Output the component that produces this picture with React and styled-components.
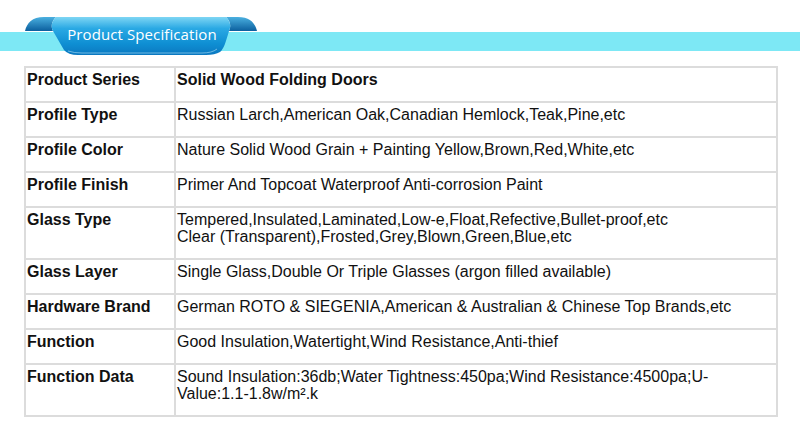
import React from "react";
import styled, { createGlobalStyle } from "styled-components";

// CORES
const cores = {
  barra: "#7de8f5",
  borda: "#dcdcdc",
  texto: "#111111",
  branco: "#ffffff",
};

const GlobalStyle = createGlobalStyle`
  html, body {
    margin: 0;
    padding: 0;
    background: ${cores.branco};
  }
  body {
    font-family: "Liberation Sans", Arial, sans-serif;
    color: ${cores.texto};
  }
`;

// COMPONENTES STYLED
const Pagina = styled.div`
  width: 800px;
  height: 430px;
  overflow: hidden;
`;

const Cabecalho = styled.div`
  position: relative;
  padding-top: 32px;
  height: 34px;
`;

const Barra = styled.div`
  height: 19px;
  background-color: ${cores.barra};
`;

const Fita = styled.div`
  position: absolute;
  left: 24px;
  top: 15px;
  width: 234px;
  height: 42px;

  svg {
    display: block;
  }
`;

const TituloFita = styled.span`
  position: absolute;
  left: 0;
  right: 0;
  top: 9px;
  text-align: center;
  padding-left: 2px;
  font-family: "Open Sans", "Noto Sans", sans-serif;
  font-size: 15px;
  line-height: 20px;
  color: ${cores.branco};
  letter-spacing: 0.1px;
`;

const Tabela = styled.table`
  margin-left: 24px;
  width: 754px;
  border-collapse: collapse;
  border: 2px solid ${cores.borda};
  table-layout: fixed;
`;

const Celula = styled.td`
  border: 2px solid ${cores.borda};
  padding: 3px 2px 13px 1px;
  font-family: "Liberation Sans", Arial, sans-serif;
  font-size: 16px;
  line-height: 17px;
  vertical-align: top;
  font-weight: ${(props) => (props.rotulo || props.negrito ? 700 : 400)};
  width: ${(props) => (props.rotulo ? "145px" : "auto")};
  color: ${cores.texto};
`;

// DADOS
const linhas = [
  { rotulo: "Product Series", valor: "Solid Wood Folding Doors", negrito: true },
  {
    rotulo: "Profile Type",
    valor: "Russian Larch,American Oak,Canadian Hemlock,Teak,Pine,etc",
  },
  {
    rotulo: "Profile Color",
    valor: "Nature Solid Wood Grain + Painting Yellow,Brown,Red,White,etc",
  },
  {
    rotulo: "Profile Finish",
    valor: "Primer And Topcoat Waterproof Anti-corrosion Paint",
  },
  {
    rotulo: "Glass Type",
    valor: [
      "Tempered,Insulated,Laminated,Low-e,Float,Refective,Bullet-proof,etc",
      "Clear (Transparent),Frosted,Grey,Blown,Green,Blue,etc",
    ],
  },
  {
    rotulo: "Glass Layer",
    valor: "Single Glass,Double Or Triple Glasses (argon filled available)",
  },
  {
    rotulo: "Hardware Brand",
    valor:
      "German ROTO & SIEGENIA,American & Australian & Chinese Top Brands,etc",
  },
  {
    rotulo: "Function",
    valor: "Good Insulation,Watertight,Wind Resistance,Anti-thief",
  },
  {
    rotulo: "Function Data",
    valor:
      "Sound Insulation:36db;Water Tightness:450pa;Wind Resistance:4500pa;U-Value:1.1-1.8w/m\u00b2.k",
  },
];

function DesenhoFita() {
  return (
    <svg width="234" height="42" viewBox="0 0 234 42">
      <defs>
        <linearGradient id="corpo" x1="0" y1="0" x2="0" y2="1">
          <stop offset="0" stopColor="#7fd6f4" />
          <stop offset="0.3" stopColor="#2aa9e4" />
          <stop offset="0.7" stopColor="#0f8fd3" />
          <stop offset="1" stopColor="#0b78c0" />
        </linearGradient>
        <linearGradient id="dobra" x1="0" y1="0" x2="0" y2="1">
          <stop offset="0" stopColor="#4ab0e0" />
          <stop offset="1" stopColor="#0b5f9e" />
        </linearGradient>
      </defs>
      {/* dobras de tras */}
      <path d="M1,16 C3,8 8,2 20,2 L32,2 C27,7 27,12 29,16 Z" fill="url(#dobra)" />
      <path d="M233,16 C231,8 226,2 214,2 L202,2 C207,7 207,12 205,16 Z" fill="url(#dobra)" />
      {/* corpo */}
      <path
        d="M29,16 C27,12 27,7 32,2 L202,2 C207,7 207,12 205,16 C202,26 200,34 196,37 Q191,40 182,40 L54,40 Q44,40 40,35 Z"
        fill="url(#corpo)"
      />
      <path
        d="M44,36 Q50,38 58,38 L178,38 Q188,38 193,34"
        fill="none"
        stroke="#bfe9fb"
        strokeWidth="0.8"
        opacity="0.7"
      />
    </svg>
  );
}

// COMPONENTE PRINCIPAL
export default function App() {
  return (
    <Pagina>
      <GlobalStyle />
      <Cabecalho>
        <Barra />
        <Fita>
          <DesenhoFita />
          <TituloFita>Product Specification</TituloFita>
        </Fita>
      </Cabecalho>

      <Tabela>
        <tbody>
          {linhas.map((linha) => (
            <tr key={linha.rotulo}>
              <Celula rotulo>{linha.rotulo}</Celula>
              <Celula negrito={linha.negrito}>
                {Array.isArray(linha.valor)
                  ? linha.valor.map((parte, i) => (
                      <React.Fragment key={i}>
                        {i > 0 && <br />}
                        {parte}
                      </React.Fragment>
                    ))
                  : linha.valor}
              </Celula>
            </tr>
          ))}
        </tbody>
      </Tabela>
    </Pagina>
  );
}
